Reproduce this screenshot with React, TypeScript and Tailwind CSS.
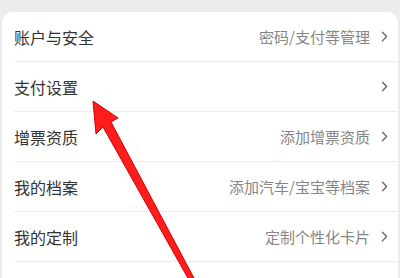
import React from "react";

const rows = [
  { label: "账户与安全", hint: "密码/支付等管理" },
  { label: "支付设置", hint: "" },
  { label: "增票资质", hint: "添加增票资质" },
  { label: "我的档案", hint: "添加汽车/宝宝等档案" },
  { label: "我的定制", hint: "定制个性化卡片" },
  { label: "", hint: "" },
];

function Chevron() {
  return (
    <svg width="7" height="11" viewBox="0 0 7 11" className="shrink-0">
      <path d="M1.5 1.2 L5.6 5.5 L1.5 9.8" fill="none" stroke="#666" strokeWidth="1.3" strokeLinecap="round" strokeLinejoin="round" />
    </svg>
  );
}

export default function App() {
  return (
    <div
      className="relative w-[400px] h-[278px] overflow-hidden bg-[#ececec] pt-[12px] px-[2px]"
      style={{ fontFamily: '"Noto Sans CJK SC", "Noto Sans", sans-serif' }}
    >
      <div className="bg-white rounded-t-[10px] h-full">
        {rows.map((r, i) => (
          <div key={i} className="pl-[12px]">
            <div className="flex items-center justify-between h-[50px] pr-[10px] border-b border-[#ededed]">
              <span className="text-[16px] text-[#333] leading-none">{r.label}</span>
              {r.label && (
                <div className="flex items-center gap-[11px]">
                  {r.hint && <span className="text-[15px] text-[#858585] leading-none">{r.hint}</span>}
                  <Chevron />
                </div>
              )}
            </div>
          </div>
        ))}
      </div>
      {/* red pointer arrow */}
      <svg className="absolute left-0 top-0" width="400" height="278" viewBox="0 0 400 278">
        <polygon
          points="93,101 118,118 111,122 195,280 189,280 103,127 96,134"
          fill="#ff1c1c"
          stroke="#d40000"
          strokeWidth="1"
          strokeLinejoin="round"
        />
      </svg>
    </div>
  );
}
